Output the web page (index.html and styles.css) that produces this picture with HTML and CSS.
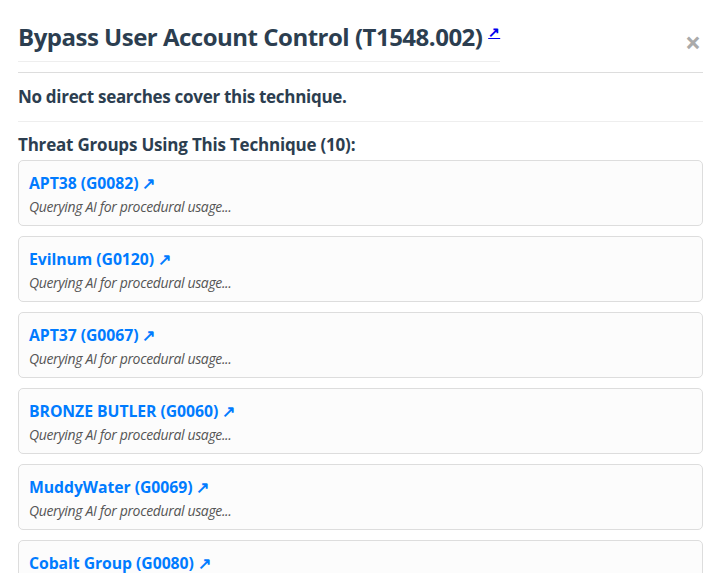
FILE: index.html
```html
<!DOCTYPE html>
<html>
<head>
<meta charset="utf-8">
<link rel="stylesheet" href="styles.css">
</head>
<body>
<div class="modal">
  <div class="modal-header">
    <h2 class="title">Bypass User Account Control (T1548.002) <sup><a class="ext" href="#">↗</a></sup></h2>
    <span class="close">×</span>
  </div>
  <div class="section no-search">
    <p class="notice">No direct searches cover this technique.</p>
  </div>
  <h3 class="groups-title">Threat Groups Using This Technique (10):</h3>
  <div class="cards">
    <div class="card"><a class="group" href="#">APT38 (G0082) ↗</a><div class="usage">Querying AI for procedural usage...</div></div>
    <div class="card"><a class="group" href="#">Evilnum (G0120) ↗</a><div class="usage">Querying AI for procedural usage...</div></div>
    <div class="card"><a class="group" href="#">APT37 (G0067) ↗</a><div class="usage">Querying AI for procedural usage...</div></div>
    <div class="card"><a class="group" href="#">BRONZE BUTLER (G0060) ↗</a><div class="usage">Querying AI for procedural usage...</div></div>
    <div class="card"><a class="group" href="#">MuddyWater (G0069) ↗</a><div class="usage">Querying AI for procedural usage...</div></div>
    <div class="card"><a class="group" href="#">Cobalt Group (G0080) ↗</a><div class="usage">Querying AI for procedural usage...</div></div>
  </div>
</div>
</body>
</html>
```
FILE: styles.css
```css
html, body {
  margin: 0;
  padding: 0;
  background: #fff;
  font-family: "Open Sans", "Noto Sans", sans-serif;
  color: #2c3e50;
  overflow: hidden;
}
.modal {
  padding: 0 18px;
}
.modal-header {
  display: flex;
  justify-content: space-between;
  align-items: flex-start;
  border-bottom: 1px solid #ddd;
  padding-bottom: 10px;
}
.title {
  margin: 21px 0 0 0;
  font-size: 24px;
  font-weight: 700;
  line-height: 32px;
  padding-bottom: 8px;
  border-bottom: 1px solid #eee;
  letter-spacing: -0.5px;
}
.title sup {
  font-size: 14px;
  line-height: 0;
  letter-spacing: 0;
}
.ext {
  color: #0000ee;
  text-decoration: underline;
}
.close {
  color: #aaa;
  font-size: 28px;
  font-weight: 700;
  line-height: 28px;
  margin-top: 28px;
  margin-right: 2px;
}
.no-search {
  border-bottom: 1px solid #eee;
  padding: 12px 0 12px;
}
.notice {
  margin: 0;
  font-size: 17px;
  font-weight: 700;
  line-height: 24px;
  letter-spacing: -0.3px;
}
.groups-title {
  margin: 11px 0 3px;
  font-size: 17px;
  font-weight: 700;
  line-height: 24px;
  letter-spacing: -0.2px;
}
.cards {
  display: flex;
  flex-direction: column;
  gap: 10px;
}
.card {
  background: #fcfcfc;
  border: 1px solid #ddd;
  border-radius: 5px;
  padding: 12px 10px 10px;
  height: 66px;
  box-sizing: border-box;
}
.group {
  display: block;
  color: #007bff;
  font-weight: 700;
  font-size: 15.75px;
  line-height: 20px;
  text-decoration: none;
  letter-spacing: -0.05px;
}
.usage {
  font-style: italic;
  font-size: 14px;
  line-height: 20px;
  margin-top: 4px;
  color: #555;
  letter-spacing: -0.35px;
}
```
